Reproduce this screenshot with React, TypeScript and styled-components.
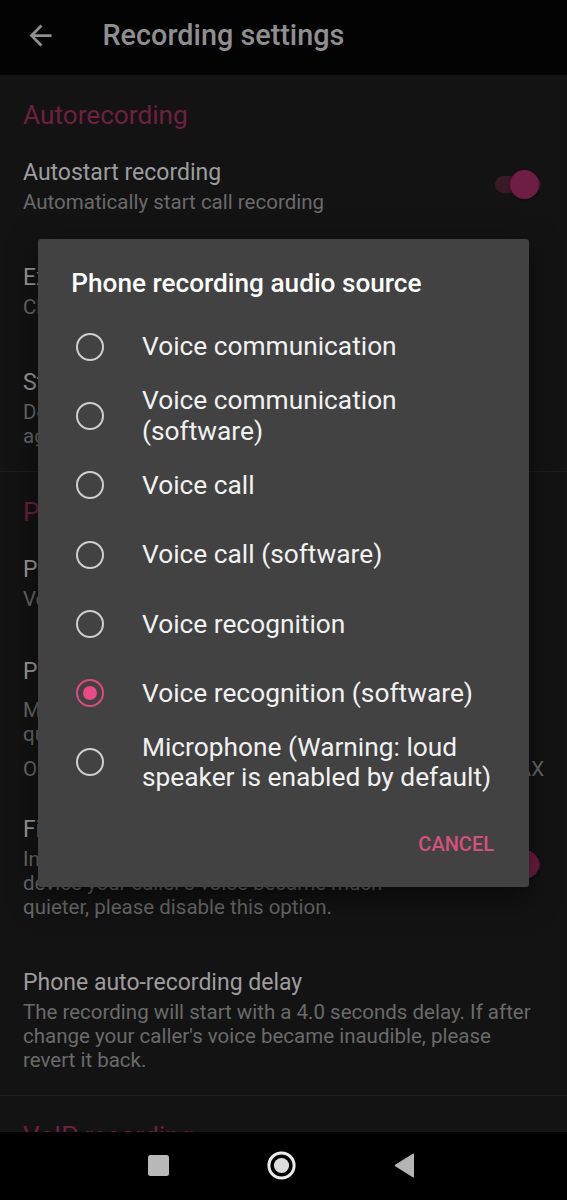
import styled, { createGlobalStyle } from 'styled-components';

const GlobalStyle = createGlobalStyle`
  html, body {
    margin: 0;
    padding: 0;
    background: #131313;
  }
  body {
    font-family: Roboto, "Liberation Sans", sans-serif;
    overflow: hidden;
  }
`;

const Screen = styled.div`
  position: relative;
  width: 567px;
  height: 1200px;
  overflow: hidden;
  background: #131313;
`;

const Toolbar = styled.header`
  height: 75px;
  box-sizing: border-box;
  padding: 0 0 4px 23.5px;
  display: flex;
  align-items: center;
  background: #030303;
`;

const ToolbarTitle = styled.h1`
  margin: 0 0 0 46px;
  font-size: 28.8px;
  line-height: 33px;
  font-weight: 500;
  color: #8f8f8f;
`;

const Category = styled.div<{ $divided?: boolean }>`
  padding: 25px 23px 2px;
  font-size: 26.2px;
  line-height: 30px;
  color: #6d2040;
  border-top: ${(p) => (p.$divided ? '1px solid #1f1f1f' : 'none')};
`;

const Item = styled.div<{ $slider?: boolean }>`
  display: flex;
  align-items: center;
  gap: 16px;
  padding: ${(p) => (p.$slider ? '24px 23px 0' : '27px 23px 23px')};
`;

const ItemText = styled.div`
  flex: 1;
  min-width: 0;
`;

const ItemTitle = styled.div`
  font-size: 23px;
  line-height: 27px;
  color: #9d9d9d;
  white-space: nowrap;
`;

const ItemSummary = styled.div<{ $wide?: boolean }>`
  margin-top: ${(p) => (p.$wide ? '12.5px' : '4px')};
  font-size: 20.5px;
  line-height: 24px;
  color: #6a6a6a;
`;

const SeekRow = styled.div`
  margin-top: 3px;
  height: 40px;
  display: flex;
  align-items: center;
  gap: 14px;
  font-size: 20.5px;
  line-height: 24px;
  color: #6a6a6a;
`;

const SeekTrack = styled.div`
  flex: 1;
  height: 3px;
  background: #2a2a2a;
`;

const SwitchTrack = styled.div`
  flex: none;
  width: 46px;
  height: 17px;
  margin: 0 3px 5px 0;
  border-radius: 9px;
  background: #3b1a28;
  display: flex;
  align-items: center;
  justify-content: flex-end;
`;

const SwitchThumb = styled.div`
  flex: none;
  width: 29px;
  height: 29px;
  margin-right: 2.5px;
  border-radius: 50%;
  background: #6e1e42;
  box-shadow: 0 1px 3px rgba(0, 0, 0, 0.4);
`;

const Dialog = styled.div`
  position: absolute;
  top: 238.5px;
  left: 38px;
  width: 491px;
  box-sizing: border-box;
  padding: 29.5px 0 31.5px;
  background: #424242;
  border-radius: 3px;
  box-shadow: 0 10px 30px rgba(0, 0, 0, 0.55);
`;

const DialogTitle = styled.h2`
  margin: 0 33px 14px 33.3px;
  font-size: 26.2px;
  line-height: 30px;
  font-weight: 500;
  color: #ffffff;
`;

const OptionRow = styled.label`
  display: flex;
  align-items: center;
  gap: 38.3px;
  min-height: 69.3px;
  padding: 0 33px 0 37.7px;
`;

const Radio = styled.span<{ $checked?: boolean }>`
  flex: none;
  box-sizing: border-box;
  width: 28px;
  height: 28px;
  border-radius: 50%;
  border: 2.75px solid ${(p) => (p.$checked ? '#dc4a7f' : '#cfcfcf')};
  display: flex;
  align-items: center;
  justify-content: center;

  &::after {
    content: '';
    display: ${(p) => (p.$checked ? 'block' : 'none')};
    width: 13.8px;
    height: 13.8px;
    border-radius: 50%;
    background: #ea4a86;
  }
`;

const OptionText = styled.span`
  font-size: 26.3px;
  line-height: 30.5px;
  color: #f1f1f1;
`;

const Actions = styled.div`
  display: flex;
  justify-content: flex-end;
  margin-top: 34.7px;
  padding: 0 35px;
`;

const TextButton = styled.button`
  background: none;
  border: 0;
  padding: 0;
  font-family: Roboto, "Liberation Sans", sans-serif;
  font-size: 20px;
  line-height: 24px;
  font-weight: 500;
  color: #d4507f;
`;

const NavBar = styled.nav`
  position: absolute;
  left: 0;
  right: 0;
  bottom: 0;
  height: 68.3px;
  background: #000;
  display: flex;
  justify-content: center;
  align-items: center;
  padding-right: 4px;
`;

const NavSlot = styled.div`
  width: 123px;
  display: flex;
  justify-content: center;
  align-items: center;
`;

const options = [
  'Voice communication',
  'Voice communication (software)',
  'Voice call',
  'Voice call (software)',
  'Voice recognition',
  'Voice recognition (software)',
  'Microphone (Warning: loud speaker is enabled by default)',
];

const Switch = () => (
  <SwitchTrack>
    <SwitchThumb />
  </SwitchTrack>
);

const BackArrow = () => (
  <svg width="33" height="33" viewBox="0 0 24 24">
    <path
      d="M20 11H7.83l5.59-5.59L12 4l-8 8 8 8 1.41-1.41L7.83 13H20v-2z"
      fill="#8f8f8f"
    />
  </svg>
);

export default function App() {
  const selected = 5;

  return (
    <Screen>
      <GlobalStyle />
      <Toolbar>
        <BackArrow />
        <ToolbarTitle>Recording settings</ToolbarTitle>
      </Toolbar>

      <Category>Autorecording</Category>
      <Item>
        <ItemText>
          <ItemTitle>Autostart recording</ItemTitle>
          <ItemSummary>Automatically start call recording</ItemSummary>
        </ItemText>
        <Switch />
      </Item>
      <Item>
        <ItemText>
          <ItemTitle>Exclude contacts</ItemTitle>
          <ItemSummary>Choose contacts that won't be recorded</ItemSummary>
        </ItemText>
      </Item>
      <Item>
        <ItemText>
          <ItemTitle>Storage cleanup</ItemTitle>
          <ItemSummary>
            Delete recordings older than the selected
            <br />
            age automatically
          </ItemSummary>
        </ItemText>
      </Item>

      <Category $divided>Phone recording</Category>
      <Item>
        <ItemText>
          <ItemTitle>Phone recording audio source</ItemTitle>
          <ItemSummary>Voice recognition (software)</ItemSummary>
        </ItemText>
      </Item>
      <Item $slider>
        <ItemText>
          <ItemTitle>Phone recording volume</ItemTitle>
          <ItemSummary $wide>
            Makes the recording louder. May reduce the
            <br />
            quality of the recording
          </ItemSummary>
          <SeekRow>
            <span>OFF</span>
            <SeekTrack />
            <span>MAX</span>
          </SeekRow>
        </ItemText>
      </Item>
      <Item>
        <ItemText>
          <ItemTitle>Fix quiet caller's voice</ItemTitle>
          <ItemSummary>
            Increases caller's voice volume. If on your
            <br />
            device your caller's voice became much
            <br />
            quieter, please disable this option.
          </ItemSummary>
        </ItemText>
        <Switch />
      </Item>
      <Item>
        <ItemText>
          <ItemTitle>Phone auto-recording delay</ItemTitle>
          <ItemSummary>
            The recording will start with a 4.0 seconds delay. If after change
            your caller's voice became inaudible, please revert it back.
          </ItemSummary>
        </ItemText>
      </Item>

      <Category $divided>VoIP recording</Category>

      <Dialog>
        <DialogTitle>Phone recording audio source</DialogTitle>
        {options.map((label, i) => (
          <OptionRow key={label}>
            <Radio $checked={i === selected} />
            <OptionText>{label}</OptionText>
          </OptionRow>
        ))}
        <Actions>
          <TextButton>CANCEL</TextButton>
        </Actions>
      </Dialog>

      <NavBar>
        <NavSlot>
          <svg width="21" height="21" viewBox="0 0 21 21">
            <rect x="0" y="0" width="21" height="21" rx="2.5" fill="#b9b9b9" />
          </svg>
        </NavSlot>
        <NavSlot>
          <svg width="29" height="29" viewBox="0 0 29 29">
            <circle cx="14.5" cy="14.5" r="12.6" fill="none" stroke="#ececec" strokeWidth="3" />
            <circle cx="14.5" cy="14.5" r="7.6" fill="#dcdcdc" />
          </svg>
        </NavSlot>
        <NavSlot>
          <svg width="21" height="25" viewBox="0 0 21 25">
            <path d="M20 1.5 L20 23.5 Q20 25 18.8 24.2 L1.2 13.3 Q0 12.5 1.2 11.7 L18.8 0.8 Q20 0 20 1.5 Z" fill="#b5b5b5" />
          </svg>
        </NavSlot>
      </NavBar>
    </Screen>
  );
}
